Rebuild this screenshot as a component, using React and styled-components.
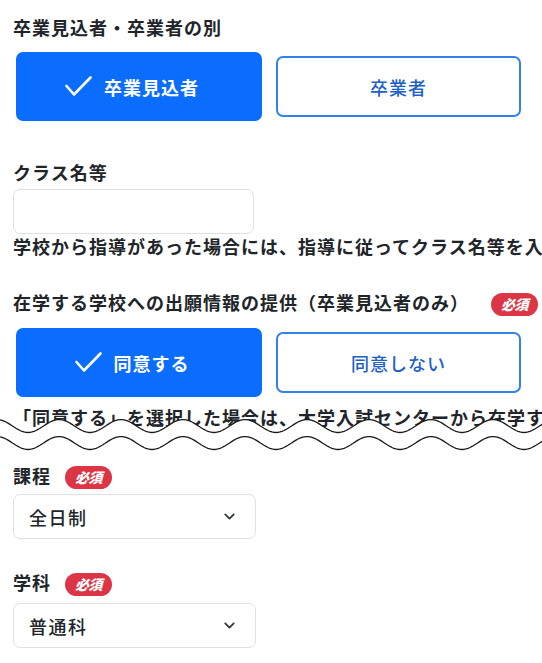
import React from 'react';
import styled, { createGlobalStyle } from 'styled-components';
import { ChevronDown } from 'lucide-react';

const GlobalStyle = createGlobalStyle`
  body {
    margin: 0;
    background: #ffffff;
    font-family: "Noto Sans CJK JP", "Noto Sans", sans-serif;
    color: #212529;
    overflow: hidden;
  }
`;

const Page = styled.div`
  width: 542px;
  height: 663px;
  padding: 14px 0 0 13px;
  box-sizing: border-box;
  overflow: hidden;
`;

const Label = styled.div`
  font-size: 18px;
  font-weight: 700;
  line-height: 27px;
  letter-spacing: 1px;
  white-space: nowrap;
  margin-top: ${p => p.$top || 0}px;
`;

const LabelRow = styled.div`
  display: flex;
  align-items: center;
  gap: ${p => p.$gap || 14}px;
  margin-top: ${p => p.$top || 0}px;
`;

const Badge = styled.span`
  display: inline-flex;
  align-items: center;
  justify-content: center;
  width: 47px;
  height: 23px;
  border-radius: 12px;
  background: #dc3545;
  color: #ffffff;
  font-size: 14px;
  font-weight: 900;
  font-style: italic;
  letter-spacing: -0.5px;
  margin-top: 3px;
`;

const ChoiceGroup = styled.div`
  display: grid;
  grid-template-columns: 246px 245px;
  column-gap: 14px;
  align-items: center;
  height: 69px;
  margin: ${p => p.$top || 0}px 0 0 3px;
`;

const Choice = styled.div`
  display: flex;
  align-items: center;
  justify-content: center;
  gap: 12px;
  box-sizing: border-box;
  border-radius: 7px;
  font-size: 18px;
  letter-spacing: 1px;
  ${p => p.$active ? `
    height: 69px;
    padding-right: 14px;
    background: #0b6dfd;
    color: #ffffff;
    font-weight: 700;
  ` : `
    height: 61px;
    border: 2px solid #3282ea;
    background: #ffffff;
    color: #1d60c6;
    font-weight: 500;
  `}
`;

const TextInput = styled.div`
  width: 241px;
  height: 45px;
  margin-top: 3px;
  box-sizing: border-box;
  border: 1px solid #dee2e6;
  border-radius: 7px;
`;

const Note = styled.div`
  font-size: 18px;
  font-weight: 700;
  line-height: 24px;
  letter-spacing: 1px;
  white-space: nowrap;
  margin-top: ${p => p.$top || 0}px;
`;

const TornEdge = styled.svg`
  display: block;
  position: relative;
  margin: -12px 0 0 -13px;
`;

const SelectBox = styled.div`
  display: flex;
  align-items: center;
  justify-content: space-between;
  width: 243px;
  height: 45px;
  margin-top: ${p => p.$top || 0}px;
  padding: 0 17px 0 15px;
  box-sizing: border-box;
  border: 1px solid #dee2e6;
  border-radius: 7px;
  font-size: 18px;
  font-weight: 500;
  letter-spacing: 1.5px;
  color: #212529;
`;

const CheckMark = () => (
  <svg width="27" height="21" viewBox="0 0 27 21">
    <polyline points="1.5,10 9,18.5 25.5,1.5" fill="none" stroke="#ffffff" strokeWidth="2.6" strokeLinecap="round" strokeLinejoin="round" />
  </svg>
);

const wave = (mid, amp, len, width) => {
  const pts = [];
  for (let x = 0; x <= width; x += 2) {
    const y = mid - amp * Math.cos(((x + 3) / len) * Math.PI * 2);
    pts.push(`${x},${y.toFixed(2)}`);
  }
  return pts;
};

const Cut = () => {
  const top = wave(9, 6.5, 62, 542);
  const bottom = wave(26, 6.5, 62, 542);
  return (
    <TornEdge width="542" height="35" viewBox="0 0 542 35">
      <polygon points={`${top.join(' ')} 542,35 0,35`} fill="#ffffff" />
      <polyline points={top.join(' ')} fill="none" stroke="#1a1a1a" strokeWidth="1.3" />
      <polyline points={bottom.join(' ')} fill="none" stroke="#1a1a1a" strokeWidth="1.3" />
    </TornEdge>
  );
};

export default function App() {
  return (
    <>
      <GlobalStyle />
      <Page>
        <Label>卒業見込者・卒業者の別</Label>
        <ChoiceGroup $top={11}>
          <Choice $active><CheckMark />卒業見込者</Choice>
          <Choice>卒業者</Choice>
        </ChoiceGroup>

        <Label $top={38}>クラス名等</Label>
        <TextInput />
        <Note>学校から指導があった場合には、指導に従ってクラス名等を入力してください。</Note>

        <LabelRow $top={31} $gap={22}>
          <Label>在学する学校への出願情報の提供（卒業見込者のみ）</Label>
          <Badge>必須</Badge>
        </LabelRow>
        <ChoiceGroup $top={12}>
          <Choice $active><CheckMark />同意する</Choice>
          <Choice>同意しない</Choice>
        </ChoiceGroup>
        <Note $top={8}>「同意する」を選択した場合は、大学入試センターから在学する学校へ出願情報が提供されます。</Note>
        <Cut />

        <LabelRow $top={10}>
          <Label>課程</Label>
          <Badge>必須</Badge>
        </LabelRow>
        <SelectBox $top={5}>
          全日制
          <ChevronDown size={17} strokeWidth={2.6} color="#343a40" />
        </SelectBox>

        <LabelRow $top={30}>
          <Label>学科</Label>
          <Badge>必須</Badge>
        </LabelRow>
        <SelectBox $top={7}>
          普通科
          <ChevronDown size={17} strokeWidth={2.6} color="#343a40" />
        </SelectBox>
      </Page>
    </>
  );
}
